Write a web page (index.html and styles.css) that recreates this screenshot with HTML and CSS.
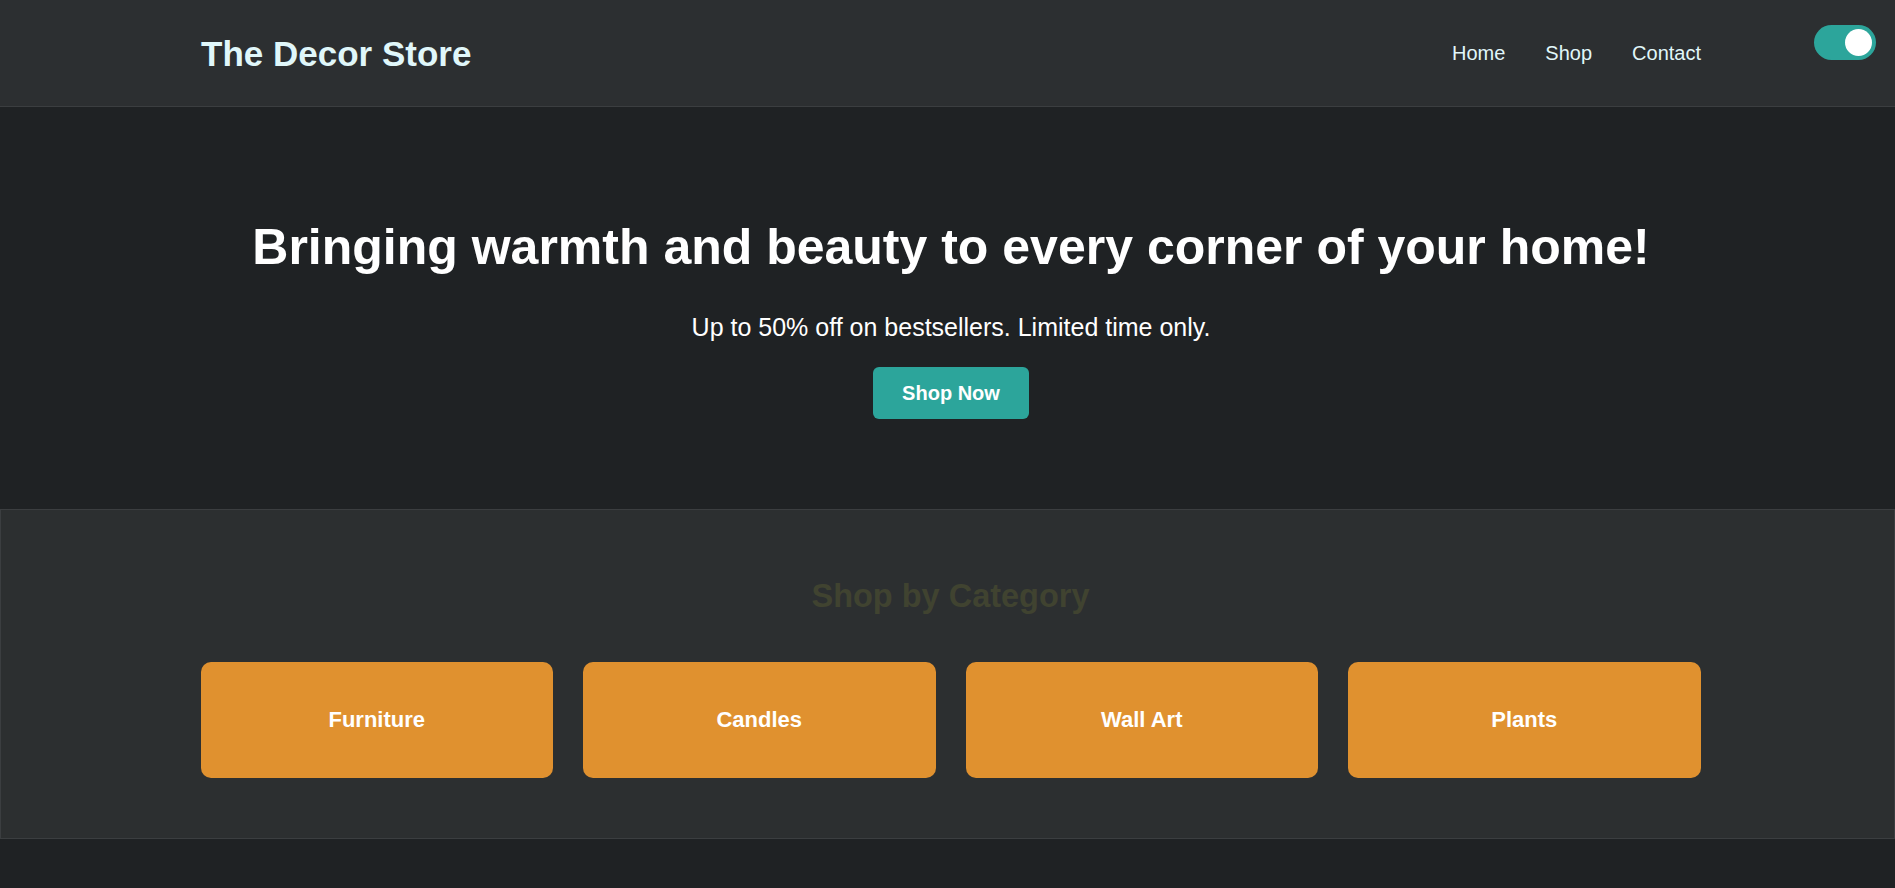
FILE: index.html
```html
<!DOCTYPE html>
<html lang="en">
<head>
<meta charset="utf-8">
<title>The Decor Store</title>
<link rel="stylesheet" href="styles.css">
</head>
<body>
<header class="site-header">
  <div class="container header-row">
    <h1 class="logo">The Decor Store</h1>
    <nav class="nav">
      <a href="#">Home</a>
      <a href="#">Shop</a>
      <a href="#">Contact</a>
    </nav>
  </div>
  <label class="toggle" aria-label="Toggle theme"><span class="knob"></span></label>
</header>

<section class="hero">
  <div class="container hero-inner">
    <h2 class="hero-title">Bringing warmth and beauty to every corner of your home!</h2>
    <p class="hero-sub">Up to 50% off on bestsellers. Limited time only.</p>
    <a class="btn" href="#">Shop Now</a>
  </div>
</section>

<section class="categories">
  <div class="container">
    <h2 class="cat-title">Shop by Category</h2>
    <div class="cat-grid">
      <div class="cat-card">Furniture</div>
      <div class="cat-card">Candles</div>
      <div class="cat-card">Wall Art</div>
      <div class="cat-card">Plants</div>
    </div>
  </div>
</section>
</body>
</html>
```

FILE: styles.css
```css
* { box-sizing: border-box; }
html, body { margin: 0; padding: 0; }
body {
  background: #1f2224;
  font-family: "Liberation Sans", Arial, sans-serif;
  color: #ffffff;
  min-height: 888px;
}
.container {
  width: 1500px;
  margin: 0 auto;
}
.site-header {
  position: relative;
  background: #2c2f31;
  border-bottom: 1px solid #3b3e40;
  padding-left: 7px;
}
.header-row {
  height: 106px;
  display: flex;
  align-items: center;
  justify-content: space-between;
}
.logo {
  margin: 0;
  font-size: 35px;
  font-weight: 700;
  color: #e0f7fa;
  line-height: 1;
}
.nav {
  display: flex;
  gap: 40px;
}
.nav a {
  color: #e0f7fa;
  text-decoration: none;
  font-size: 20px;
  line-height: 1;
}
.toggle {
  position: absolute;
  top: 25px;
  right: 19px;
  width: 62px;
  height: 35px;
  border-radius: 18px;
  background: #2ca59b;
  display: flex;
  align-items: center;
  justify-content: flex-end;
  padding-right: 4px;
}
.knob {
  width: 27px;
  height: 27px;
  border-radius: 50%;
  background: #ffffff;
}
.hero {
  background: #1f2224;
  padding: 112px 0 90px 7px;
}
.hero-inner {
  display: flex;
  flex-direction: column;
  align-items: center;
  text-align: center;
}
.hero-title {
  margin: 0;
  font-size: 50px;
  line-height: 57px;
  font-weight: 700;
}
.hero-sub {
  margin: 37px 0 0;
  font-size: 25px;
  line-height: 29px;
}
.btn {
  margin-top: 25px;
  display: inline-block;
  white-space: nowrap;
  background: #2ca59b;
  color: #ffffff;
  text-decoration: none;
  font-weight: 700;
  font-size: 20px;
  line-height: 23px;
  padding: 15px 29px 14px;
  border-radius: 6px;
}
.categories {
  background: #2c2f30;
  border: 1px solid #3b3e40;
  padding: 68px 0 60px 6px;
}
.cat-title {
  margin: 0 0 47px;
  text-align: center;
  font-size: 32.5px;
  line-height: 37px;
  font-weight: 700;
  color: #404330;
}
.cat-grid {
  display: grid;
  grid-template-columns: repeat(4, 1fr);
  gap: 30px;
}
.cat-card {
  background: #e0912f;
  border-radius: 10px;
  height: 116px;
  display: flex;
  align-items: center;
  justify-content: center;
  font-size: 22px;
  font-weight: 700;
  color: #ffffff;
}
```
